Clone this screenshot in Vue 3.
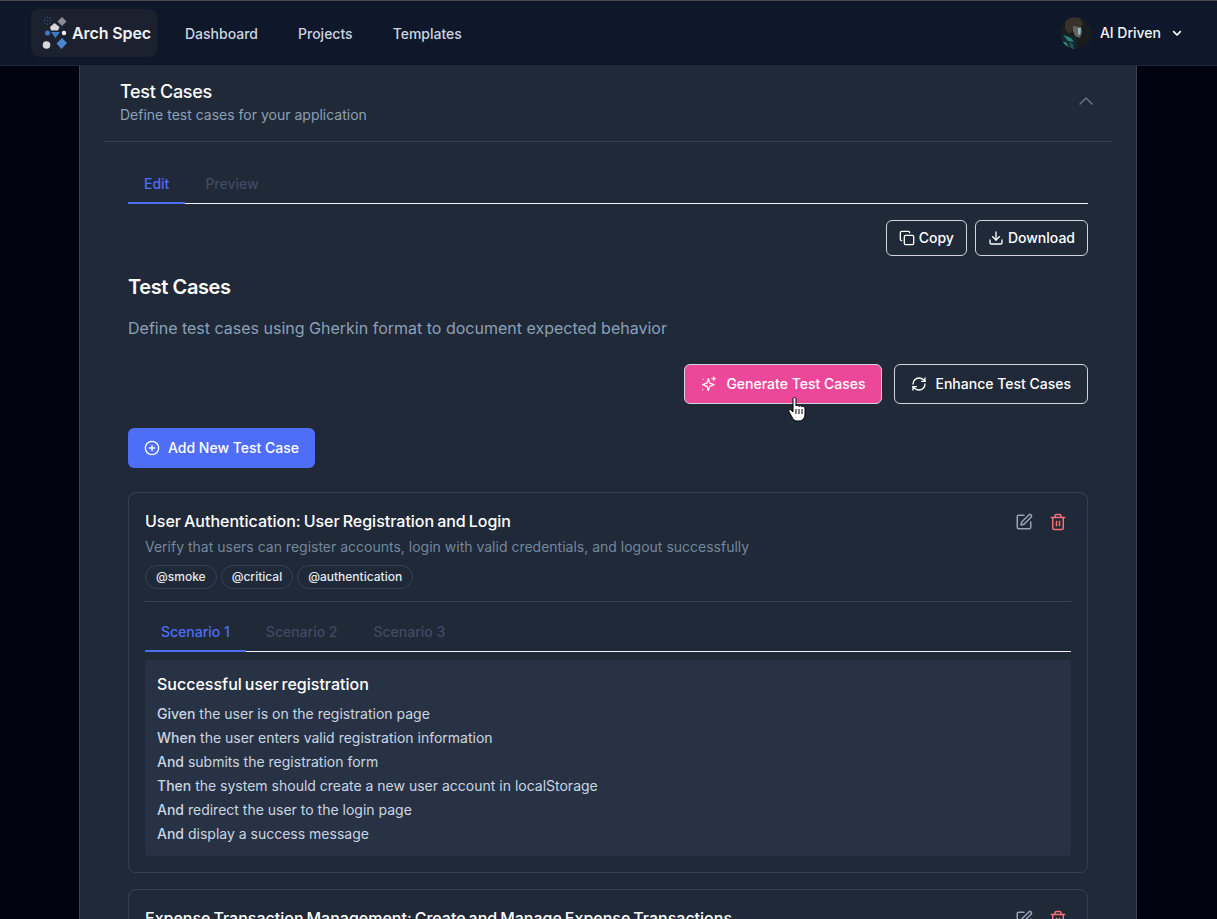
<template>
  <div class="page">
    <!-- NAV -->
    <header class="nav">
      <div class="nav-left">
        <div class="logo">
          <svg width="28" height="34" viewBox="0 0 28 34">
            <g fill="#3f6fb0">
              <circle cx="3" cy="2" r=".6" /><circle cx="5.500" cy="1" r=".6" /><circle cx="8" cy="2" r=".6" />
              <circle cx="2" cy="4.500" r=".6" /><circle cx="9" cy="4.500" r=".6" /><circle cx="5.500" cy="4.500" r=".6" />
              <circle cx="3" cy="7" r=".6" /><circle cx="5.500" cy="8" r=".6" /><circle cx="8" cy="7" r=".6" />
            </g>
            <path d="M20 1l4.500 4.500L20 10l-4.500-4.500z" fill="#8a8d94" />
            <path d="M12.500 7l5 4-1.500 3.500H9l-1-3.500z" fill="#d8d8da" />
            <circle cx="5.500" cy="17" r="2.500" fill="#3f78c4" />
            <circle cx="22" cy="17" r="2.200" fill="#f4f4f5" />
            <path d="M9 16h9l-4.500 6z" fill="#3f78c4" />
            <path d="M20 22l5 5-5.500 6-5-5.500z" fill="#4a86d0" />
            <circle cx="4.500" cy="29" r="3.800" fill="#d8d8da" />
          </svg>
          <span class="logo-text">Arch Spec</span>
        </div>
        <nav class="links">
          <a v-for="l in navLinks" :key="l">{{ l }}</a>
        </nav>
      </div>
      <div class="user">
        <svg class="avatar" width="32" height="32" viewBox="0 0 32 32">
          <defs>
            <clipPath id="av"><circle cx="16" cy="16" r="16" /></clipPath>
            <filter id="soft"><feGaussianBlur stdDeviation="0.6" /></filter>
          </defs>
          <g clip-path="url(#av)">
            <rect width="32" height="32" fill="#191c1e" />
            <g filter="url(#soft)">
              <path d="M5 5l6-5 9 1 3 6-3 3-6-1-2 6-3 2-4-5z" fill="#38322b" />
              <path d="M13 9l8 1 1 5-2 6-5-2-2-5z" fill="#62665f" />
              <path d="M18 11l3 0-1 7-2-1z" fill="#86bccb" />
              <path d="M0 23l5-7 9 3 4 3-2 10H0z" fill="#14262a" />
              <path d="M3 18l8 3 3 4-6-1zM0 25l6 0 4 7H3z" fill="#2a857e" />
              <path d="M9 25l4 2 1 5h-3z" fill="#1d5a56" />
            </g>
          </g>
        </svg>
        <span class="user-name">AI Driven</span>
        <svg width="16" height="16" viewBox="0 0 24 24" fill="none" stroke="#fff" stroke-width="2.500" stroke-linecap="round" stroke-linejoin="round"><path d="M7 10l5 5 5-5" /></svg>
      </div>
    </header>

    <main class="panel">
      <div class="panel-head">
        <div>
          <h2 class="panel-title">Test Cases</h2>
          <p class="panel-sub">Define test cases for your application</p>
        </div>
        <svg class="collapse" width="24" height="24" viewBox="0 0 24 24" fill="none" stroke="#64748b" stroke-width="1.500" stroke-linecap="round" stroke-linejoin="round"><path d="M6 15l6-6 6 6" /></svg>
      </div>

      <div class="panel-body">
        <div class="tabs">
          <span class="tab active">Edit</span>
          <span class="tab">Preview</span>
        </div>

        <div class="row-right top-actions">
          <button class="btn small">
            <svg width="16" height="16" viewBox="0 0 24 24" fill="none" stroke="currentColor" stroke-width="2" stroke-linecap="round" stroke-linejoin="round"><rect x="8" y="8" width="14" height="14" rx="2" /><path d="M4 16c-1.100 0-2-.9-2-2V4c0-1.100.9-2 2-2h10c1.100 0 2 .9 2 2" /></svg>
            <span class="lbl">Copy</span>
          </button>
          <button class="btn small">
            <svg width="16" height="16" viewBox="0 0 24 24" fill="none" stroke="currentColor" stroke-width="2" stroke-linecap="round" stroke-linejoin="round"><path d="M21 15v4a2 2 0 0 1-2 2H5a2 2 0 0 1-2-2v-4" /><path d="M7 10l5 5 5-5" /><path d="M12 15V3" /></svg>
            <span class="lbl">Download</span>
          </button>
        </div>

        <h1 class="section-title">Test Cases</h1>
        <p class="section-desc">Define test cases using Gherkin format to document expected behavior</p>

        <div class="row-right gen-actions">
          <div class="cursor-wrap">
            <button class="btn big pink">
              <svg width="16" height="16" viewBox="0 0 24 24" fill="none" stroke="currentColor" stroke-width="2" stroke-linecap="round" stroke-linejoin="round"><path d="M11 4l2 6.500 6.500 2.500-6.500 2.500L11 22l-2-6.500L2.500 13 9 10.500z" /><path d="M19 1.500v5M16.500 4h5M3 5h.01M2.500 20.500h.01" /></svg>
              <span class="lbl">Generate Test Cases</span>
            </button>
            <svg class="hand" width="18" height="25" viewBox="0 0 18 25">
              <path d="M5 2c0-2 3-2 3 0v7c0-1 3-1 3 .5 0-1 3-1 3 .5 0-.8 3-.8 3 1v6c0 3-2 7-6 7H9c-3 0-4-2-5-4L1 15c-1-2 1-3 2-2l2 2z" fill="#fff" stroke="#000" stroke-width="1" stroke-linejoin="round" />
              <path d="M8 12v5M11 12v5M14 12v5" stroke="#000" stroke-width="1" fill="none" />
            </svg>
          </div>
          <button class="btn big">
            <svg width="16" height="16" viewBox="0 0 24 24" fill="none" stroke="currentColor" stroke-width="2" stroke-linecap="round" stroke-linejoin="round"><path d="M3 12a9 9 0 0 1 9-9 9.750 9.750 0 0 1 6.740 2.740L21 8" /><path d="M21 3v5h-5" /><path d="M21 12a9 9 0 0 1-9 9 9.750 9.750 0 0 1-6.740-2.740L3 16" /><path d="M8 16H3v5" /></svg>
            <span class="lbl">Enhance Test Cases</span>
          </button>
        </div>

        <button class="btn-add">
          <svg width="16" height="16" viewBox="0 0 24 24" fill="none" stroke="currentColor" stroke-width="2" stroke-linecap="round" stroke-linejoin="round"><circle cx="12" cy="12" r="10" /><path d="M12 8v8M8 12h8" /></svg>
          <span class="lbl">Add New Test Case</span>
        </button>

        <!-- КАРТОЧКА ТЕСТА -->
        <section class="case">
          <div class="case-head">
            <div>
              <h3 class="case-title">User Authentication: User Registration and Login</h3>
              <p class="case-sub">Verify that users can register accounts, login with valid credentials, and logout successfully</p>
            </div>
            <div class="case-icons">
              <svg width="18" height="18" viewBox="0 0 24 24" fill="none" stroke="#94a3b8" stroke-width="2" stroke-linecap="round" stroke-linejoin="round"><path d="M12 3H5a2 2 0 0 0-2 2v14a2 2 0 0 0 2 2h14a2 2 0 0 0 2-2v-7" /><path d="M18.400 2.600a2.120 2.120 0 0 1 3 3L12 15l-4 1 1-4z" /></svg>
              <svg width="18" height="18" viewBox="0 0 24 24" fill="none" stroke="#f87171" stroke-width="2" stroke-linecap="round" stroke-linejoin="round"><path d="M3 6h18" /><path d="M19 6v14a2 2 0 0 1-2 2H7a2 2 0 0 1-2-2V6" /><path d="M8 6V4a2 2 0 0 1 2-2h4a2 2 0 0 1 2 2v2" /><path d="M10 11v6M14 11v6" /></svg>
            </div>
          </div>
          <div class="tags">
            <span v-for="t in tags" :key="t" class="tag">{{ t }}</span>
          </div>
          <div class="case-line"></div>
          <div class="tabs scen-tabs">
            <span v-for="(s, i) in scenarios" :key="s" class="tab" :class="{ active: i === 0 }">{{ s }}</span>
          </div>
          <div class="scenario">
            <h4 class="scen-title">Successful user registration</h4>
            <p v-for="st in steps" :key="st.text" class="step"><b>{{ st.kw }}</b> {{ st.text }}</p>
          </div>
        </section>

        <section class="case">
          <div class="case-head">
            <h3 class="case-title">Expense Transaction Management: Create and Manage Expense Transactions</h3>
            <div class="case-icons">
              <svg width="18" height="18" viewBox="0 0 24 24" fill="none" stroke="#94a3b8" stroke-width="2" stroke-linecap="round" stroke-linejoin="round"><path d="M12 3H5a2 2 0 0 0-2 2v14a2 2 0 0 0 2 2h14a2 2 0 0 0 2-2v-7" /><path d="M18.400 2.600a2.120 2.120 0 0 1 3 3L12 15l-4 1 1-4z" /></svg>
              <svg width="18" height="18" viewBox="0 0 24 24" fill="none" stroke="#f87171" stroke-width="2" stroke-linecap="round" stroke-linejoin="round"><path d="M3 6h18" /><path d="M19 6v14a2 2 0 0 1-2 2H7a2 2 0 0 1-2-2V6" /><path d="M8 6V4a2 2 0 0 1 2-2h4a2 2 0 0 1 2 2v2" /><path d="M10 11v6M14 11v6" /></svg>
            </div>
          </div>
        </section>
      </div>
    </main>
  </div>
</template>

<script setup>
const navLinks = ["Dashboard", "Projects", "Templates"];
const tags = ["@smoke", "@critical", "@authentication"];
const scenarios = ["Scenario 1", "Scenario 2", "Scenario 3"];
const steps = [
  { kw: "Given", text: "the user is on the registration page" },
  { kw: "When", text: "the user enters valid registration information" },
  { kw: "And", text: "submits the registration form" },
  { kw: "Then", text: "the system should create a new user account in localStorage" },
  { kw: "And", text: "redirect the user to the login page" },
  { kw: "And", text: "display a success message" },
];
</script>

<style>
html, body {
  margin: 0;
  background: #00020f;
}
</style>

<style scoped>
.page {
  height: 919px;
  overflow: hidden;
  background: #00020f;
  font-family: Inter, "Noto Sans", sans-serif;
  color: #fff;
}

.nav {
  box-sizing: border-box;
  border-top: 1px solid #4a4a42;
  border-bottom: 1px solid #1f2937;
  height: 66px;
  background: #0f172a;
  padding: 8px 32px 0 31px;
  display: flex;
  justify-content: space-between;
  align-items: flex-start;
}

.nav-left {
  display: flex;
  align-items: center;
}

.logo {
  width: 126px;
  height: 48px;
  box-sizing: border-box;
  background: #1c2130;
  border-radius: 8px;
  padding: 7px 0 0 11px;
  display: flex;
  gap: 2px;
}

.logo svg {
  flex: none;
}

.logo-text {
  font-size: 16px;
  font-weight: 600;
  line-height: 35px;
  color: #f1f1f3;
  white-space: nowrap;
  letter-spacing: -0.1px;
}

.links {
  display: flex;
  gap: 40px;
  margin-left: 28px;
}

.links a {
  font-size: 14px;
  font-weight: 500;
  color: #cbd5e1;
}

.user {
  display: flex;
  align-items: center;
  gap: 8px;
  height: 48px;
}

.user-name {
  font-size: 14px;
  font-weight: 500;
  color: #f1f5f9;
  margin: -2px 0 0;
}

.panel {
  width: 1058px;
  box-sizing: border-box;
  margin: 0 0 0 79px;
  background: #1f2937;
  border-left: 1px solid #374151;
  border-right: 1px solid #374151;
  padding: 0 24px;
}

.panel-head {
  display: flex;
  justify-content: space-between;
  align-items: center;
  height: 76px;
  box-sizing: border-box;
  padding: 0 14px 0 16px;
  border-bottom: 1px solid #374151;
}

.collapse {
  margin-top: -6px;
}

.panel-title {
  margin: 0;
  font-size: 18px;
  font-weight: 500;
  line-height: 24px;
  color: #fff;
  letter-spacing: -0.3px;
}

.panel-sub {
  margin: -1px 0 0;
  font-size: 14px;
  line-height: 24px;
  color: #8ca0b8;
}

.panel-body {
  padding: 24px 24px 0;
}

.tabs {
  display: flex;
  border-bottom: 1px solid #f1f5f9;
  height: 38px;
  box-sizing: border-box;
}

.tab {
  padding: 0 16px;
  height: 38px;
  box-sizing: border-box;
  line-height: 36px;
  font-size: 14px;
  font-weight: 500;
  color: #3f4b63;
  margin-bottom: -1px;
}

.tab + .tab {
  padding: 0 16px 0 20px;
}

.tab.active {
  color: #4f6df5;
  border-bottom: 2px solid #4f6df5;
}

.row-right {
  display: flex;
  justify-content: flex-end;
}

.top-actions {
  margin-top: 16px;
  gap: 8px;
}

.btn {
  display: inline-flex;
  align-items: center;
  justify-content: center;
  font-family: inherit;
  font-weight: 500;
  font-size: 14px;
  color: #fff;
  background: transparent;
  border: 1px solid #d1d5db;
  border-radius: 6px;
  box-sizing: border-box;
  padding: 0;
}

.lbl {
  margin-top: -2px;
}

.btn.small {
  height: 36px;
  gap: 4px;
  padding: 0 12px;
}

.btn.big {
  height: 40px;
  gap: 8px;
  padding: 0 16px;
}

.btn.pink {
  background: #ec4899;
  gap: 9px;
}

.section-title {
  margin: 18px 0 0;
  font-size: 20px;
  font-weight: 600;
  line-height: 26px;
  letter-spacing: -0.4px;
}

.section-desc {
  margin: 16px 0 0;
  font-size: 16px;
  line-height: 24px;
  color: #8ca0b8;
}

.gen-actions {
  margin-top: 24px;
  gap: 12px;
}

.cursor-wrap {
  position: relative;
}

.hand {
  position: absolute;
  left: 104px;
  top: 33px;
}

.btn-add {
  display: inline-flex;
  align-items: center;
  gap: 8px;
  height: 40px;
  padding: 0 16px;
  margin-top: 24px;
  border: none;
  border-radius: 6px;
  background: #4f6ef7;
  color: #fff;
  font-family: inherit;
  font-size: 14px;
  font-weight: 500;
}

.case {
  margin-top: 24px;
  border: 1px solid #374151;
  border-radius: 8px;
  padding: 16px;
}

.case + .case {
  margin-top: 16px;
}

.case-head {
  display: flex;
  justify-content: space-between;
}

.case-title {
  margin: 0;
  font-size: 16px;
  font-weight: 500;
  line-height: 24px;
  color: #fff;
  word-spacing: -1.3px;
}

.case-sub {
  margin: 2px 0 0;
  font-size: 14px;
  line-height: 24px;
  color: #74879d;
}

.case-icons {
  display: flex;
  gap: 16px;
  padding: 4px 4px 0 0;
  height: 20px;
}

.tags {
  display: flex;
  gap: 4px;
  margin-top: 6px;
}

.tag {
  height: 24px;
  box-sizing: border-box;
  line-height: 22px;
  padding: 0 10px;
  border: 1px solid #374151;
  border-radius: 12px;
  font-size: 12px;
  font-weight: 500;
  color: #e2e8f0;
}

.case-line {
  height: 1px;
  background: #374151;
  margin-top: 12px;
}

.scen-tabs {
  margin-top: 12px;
}

.scenario {
  margin-top: 8px;
  background: #273345;
  border-radius: 4px;
  padding: 12px 12px 10px;
}

.scen-title {
  margin: 0 0 6px;
  font-size: 16px;
  font-weight: 500;
  line-height: 24px;
  color: #fff;
  word-spacing: -1.3px;
}

.step {
  margin: 0;
  font-size: 14px;
  line-height: 24px;
  color: #cbd5e1;
}

.step b {
  font-weight: 500;
}
</style>
